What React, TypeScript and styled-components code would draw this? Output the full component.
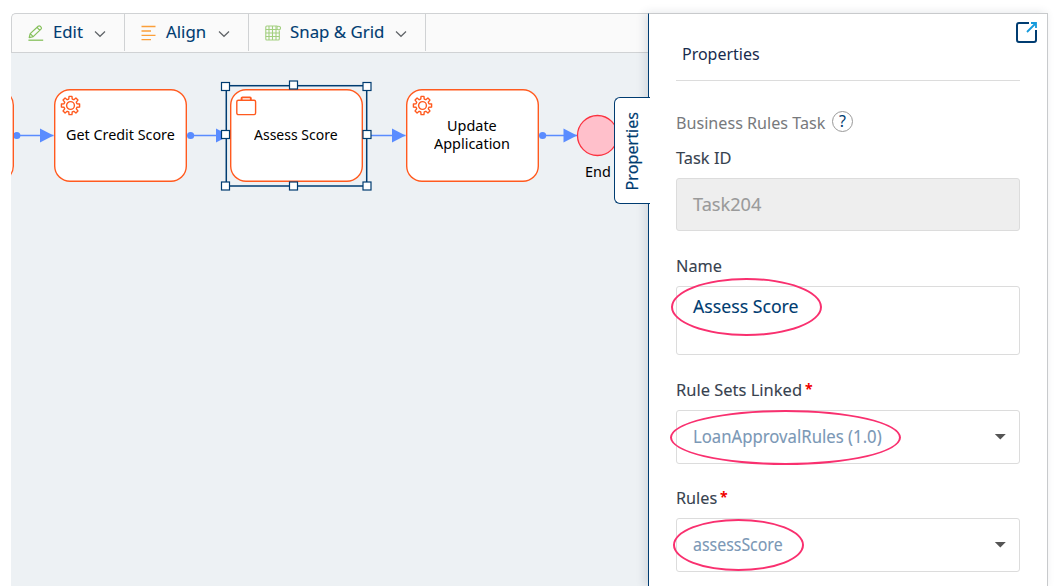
import React, { useLayoutEffect, useRef } from "react";
import styled, { createGlobalStyle } from "styled-components";

const NAVY = "#003c71";
const ORANGE = "#ff5a1f";
const BLUE = "#5a8cff";

const GlobalStyle = createGlobalStyle`
  * { box-sizing: border-box; }
  body {
    margin: 0;
    background: #fff;
    font-family: "Noto Sans", "Open Sans", sans-serif;
    overflow: hidden;
  }
`;

/* Text condensed to a fixed width */
const FitBox = styled.span<{ $w: number }>`
  display: inline-block;
  width: ${(p) => p.$w}px;
  white-space: nowrap;
  text-align: left;
`;
const FitInner = styled.span`
  display: inline-block;
  transform-origin: 0 50%;
`;
function Fit({ w, children }: { w: number; children: string }) {
  const ref = useRef<HTMLSpanElement>(null);
  useLayoutEffect(() => {
    const el = ref.current;
    if (el) el.style.transform = `scaleX(${w / el.offsetWidth})`;
  }, [w, children]);
  return (
    <FitBox $w={w}>
      <FitInner ref={ref}>{children}</FitInner>
    </FitBox>
  );
}

const Editor = styled.div`
  display: flex;
  width: 1037px;
  height: 573px;
  margin: 13px 0 0 11px;
`;
const Workspace = styled.main`
  display: flex;
  flex-direction: column;
  width: 637px;
`;
const Toolbar = styled.div`
  display: flex;
  height: 40px;
  flex: none;
  padding-bottom: 1px;
  background: #fafafa;
  border: 1px solid #d0d2d4;
  border-right: 0;
  border-top-left-radius: 5px;
`;
const ToolButton = styled.button<{ $w: number; $gap: number }>`
  display: flex;
  align-items: center;
  width: ${(p) => p.$w}px;
  padding: 0 0 0 16px;
  border: 0;
  border-right: 1px solid #d0d2d4;
  background: none;
  color: ${NAVY};
  font: 17px/36px "Noto Sans", sans-serif;
  -webkit-text-stroke: 0.1px ${NAVY};
  svg { flex: none; }
  > span { margin: -2px ${(p) => p.$gap}px 0 9px; }
`;
const Canvas = styled.section`
  position: relative;
  flex: 1;
  background: #edf1f4;
  overflow: hidden;
`;
const Layer = styled.svg`
  position: absolute;
  left: 0;
  top: 0;
  pointer-events: none;
`;
const TaskNode = styled.div<{ $x: number }>`
  position: absolute;
  left: ${(p) => p.$x}px;
  top: 36px;
  width: 133.5px;
  height: 93.3px;
  display: flex;
  flex-direction: column;
  align-items: center;
  justify-content: center;
  padding-bottom: 3px;
  border-radius: 16px;
  background: #fff;
  box-shadow: inset 0 0 0 1.4px ${ORANGE};
  color: #000;
  font-size: 15px;
  line-height: 18px;
  > svg { position: absolute; left: 6px; top: 5.6px; }
`;
const EndLabel = styled.div`
  position: absolute;
  left: 574px;
  top: 108px;
  font-size: 15px;
  line-height: 20px;
  color: #000;
`;
const Panel = styled.aside`
  position: relative;
  width: 400px;
  padding: 0 27px;
  background: #fff;
  border: 1px solid #c8cacc;
  border-bottom: 0;
  border-left-color: ${NAVY};
  box-shadow: -3px 0 9px rgba(40, 60, 80, 0.14);
`;
const PanelTab = styled.div`
  position: absolute;
  left: -35px;
  top: 83px;
  width: 36px;
  height: 107px;
  display: flex;
  align-items: center;
  justify-content: center;
  padding-right: 2px;
  border: 1px solid ${NAVY};
  border-right: 0;
  border-radius: 6px 0 0 6px;
  background: #fff;
  color: ${NAVY};
  font-size: 17px;
  line-height: 20px;
  -webkit-text-stroke: 0.15px ${NAVY};
  > span { flex: none; transform: rotate(-90deg); }
`;
const PanelHeader = styled.header`
  height: 67px;
  padding: 30px 0 0 6px;
  border-bottom: 1px solid #dcdcdc;
  color: #172b4d;
  font-size: 17px;
  line-height: 20px;
`;
const PopOut = styled.svg`
  position: absolute;
  right: 9px;
  top: 7px;
`;
const TaskKind = styled.div`
  display: flex;
  align-items: center;
  gap: 7px;
  height: 22px;
  margin-top: 30px;
  color: #77797c;
  font-size: 17px;
  line-height: 22px;
  > span:first-child { margin-top: 1px; }
`;
const Help = styled.span`
  width: 21px;
  height: 21px;
  margin-top: -1px;
  border: 1px solid #999;
  border-radius: 50%;
  color: ${NAVY};
  font-size: 16px;
  line-height: 19px;
  text-align: center;
`;
const Field = styled.div<{ $mt: number }>`
  margin-top: ${(p) => p.$mt}px;
`;
const Label = styled.label`
  display: flex;
  gap: 3px;
  height: 20px;
  color: #37424f;
  font-size: 17px;
  line-height: 20px;
  -webkit-text-stroke: 0.1px #37424f;
`;
const Required = styled.b`
  color: #f00000;
  font-size: 14px;
  line-height: 18px;
  -webkit-text-stroke: 0;
`;
const Control = styled.div<{ $h: number; $mt?: number; $tone: string; $fill?: string; $line?: number }>`
  position: relative;
  display: flex;
  justify-content: space-between;
  height: ${(p) => p.$h}px;
  margin-top: ${(p) => p.$mt ?? 10}px;
  padding: 0 13px 0 15.5px;
  border: 1px solid #dcdcdc;
  border-radius: 3px;
  background: ${(p) => p.$fill ?? "#fff"};
  color: ${(p) => p.$tone};
  font-size: 17.5px;
  line-height: ${(p) => p.$line ?? 51}px;
  -webkit-text-stroke: 0.1px ${(p) => p.$tone};
  > svg { margin-top: 23px; }
`;
const Ring = styled.i<{ $x: number; $y: number; $w: number; $h: number }>`
  position: absolute;
  left: ${(p) => p.$x}px;
  top: ${(p) => p.$y}px;
  width: ${(p) => p.$w}px;
  height: ${(p) => p.$h}px;
  border: 2px solid #f9306f;
  border-radius: 50%;
`;

const ChevronIcon = styled.svg`
  margin-top: 3px;
`;
const Chevron = () => (
  <ChevronIcon width="12" height="8" viewBox="0 0 12 8" fill="none" stroke="#606468" strokeWidth="1.2">
    <path d="M1 1.5 6 6.3 11 1.5" />
  </ChevronIcon>
);
const Caret = () => (
  <svg width="12" height="6" viewBox="0 0 12 6">
    <path d="M.8 0h11L6.3 5.5z" fill="#555" />
  </svg>
);

const gearPath = (() => {
  const pts: string[] = [];
  for (let i = 0; i < 8; i++) {
    const steps: [number, number][] = [[-15, 6.7], [-9, 9.2], [9, 9.2], [15, 6.7]];
    for (const [d, r] of steps) {
      const a = ((i * 45 + d - 90) * Math.PI) / 180;
      pts.push(`${(10.5 + r * Math.cos(a)).toFixed(2)} ${(10.5 + r * Math.sin(a)).toFixed(2)}`);
    }
  }
  return `M${pts.join("L")}Z`;
})();
const Gear = () => (
  <svg width="21" height="21" viewBox="0 0 21 21" fill="none" stroke={ORANGE} strokeWidth="1.4" strokeLinejoin="round">
    <path d={gearPath} />
    <circle cx="10.5" cy="10.5" r="3.9" />
  </svg>
);
const Briefcase = () => (
  <svg width="21" height="21" viewBox="0 0 21 21" fill="none" stroke={ORANGE}>
    <rect x="0.8" y="5.2" width="18.8" height="14.4" rx="1.6" strokeWidth="1.4" />
    <path d="M5.6 5V3.2Q5.6 2.4 6.4 2.4H14Q14.8 2.4 14.8 3.2V5" strokeWidth="1.9" />
  </svg>
);

const edges = [
  { from: 5.8, head: 29, to: 42.5 },
  { from: 179.6, head: 205, to: 218.5 },
  { from: 356, head: 381, to: 394.5 },
  { from: 531.6, head: 552.5, to: 566 },
];
const handles = [
  [214.5, 33.5], [282.5, 32], [356, 33.5],
  [214.5, 81.5], [356, 81.5],
  [214.5, 133], [282.5, 133], [356, 133],
];

export default function App() {
  return (
    <>
      <GlobalStyle />
      <Editor>
        <Workspace>
          <Toolbar>
            <ToolButton $w={113} $gap={11}>
              <svg width="16" height="18" viewBox="0 0 16 18" fill="none" stroke="#86c05c" strokeWidth="1.2" strokeLinejoin="round">
                <path d="M1.2 13.6 2.2 9.6 10.2 2.2Q11.2 1.4 12.2 2.2L13.2 3.3Q13.9 4.2 13 5.1L5.2 12.6ZM9 3.4 11.8 6.3M2.2 9.6 5.2 12.6" />
                <path d="M.4 16.2H15.2" strokeWidth="1.3" />
              </svg>
              <Fit w={29.5}>Edit</Fit>
              <Chevron />
            </ToolButton>
            <ToolButton $w={124} $gap={11}>
              <svg width="16" height="18" viewBox="0 0 16 18" stroke="#fb9f3a" strokeWidth="1.3">
                <path d="M.5 2.5H14.5M.5 7H10M.5 11.3H14.5M.5 15.7H10" />
              </svg>
              <Fit w={40.5}>Align</Fit>
              <Chevron />
            </ToolButton>
            <ToolButton $w={177} $gap={11}>
              <svg width="16" height="18" viewBox="0 0 16 18" fill="none" stroke="#a3cf80" strokeWidth="1.1">
                <path d="M12.5 2H1.8Q.8 2 .8 3V15Q.8 16 1.8 16H13.3Q14.3 16 14.3 15V6.5" />
                <path d="M4 2V16M7.5 2V16M11 2V16M.8 5.5H12.5M.8 9H14.3M.8 12.5H14.3" />
                <circle cx="13.7" cy="4" r="1.8" />
              </svg>
              <Fit w={94}>{"Snap & Grid"}</Fit>
              <Chevron />
            </ToolButton>
          </Toolbar>
          <Canvas>
            <Layer width="637" height="533">
              {edges.map((e) => (
                <g key={e.from} fill={BLUE} stroke="none">
                  <path d={`M${e.from} 82.5H${e.to}`} stroke={BLUE} strokeWidth="1.3" />
                  <circle cx={e.from} cy="82.5" r="3.6" />
                  <path d={`M${e.head} 75.5 ${e.to} 82.5 ${e.head} 89.5z`} />
                </g>
              ))}
              <circle cx="586.5" cy="82.5" r="20" fill="#ffc0cb" stroke="#fb3340" strokeWidth="1.3" />
            </Layer>
            <TaskNode $x={-131} />
            <TaskNode $x={42.7}>
              <Gear />
              <Fit w={109}>Get Credit Score</Fit>
            </TaskNode>
            <TaskNode $x={218.7}>
              <Briefcase />
              <Fit w={84}>Assess Score</Fit>
            </TaskNode>
            <TaskNode $x={394.7}>
              <Gear />
              <Fit w={50}>Update</Fit>
              <Fit w={76}>Application</Fit>
            </TaskNode>
            <EndLabel><Fit w={26}>End</Fit></EndLabel>
            <Layer width="637" height="533" stroke={NAVY}>
              <rect x="215.3" y="32.7" width="140.4" height="100.3" fill="none" strokeWidth="1.5" />
              {handles.map(([x, y]) => (
                <rect key={`${x}-${y}`} x={x - 4} y={y - 4} width="8" height="8" fill="#fff" strokeWidth="1.2" />
              ))}
            </Layer>
          </Canvas>
        </Workspace>
        <Panel>
          <PanelTab><Fit w={79}>Properties</Fit></PanelTab>
          <PopOut width="23" height="23" viewBox="0 0 23 23" fill="none">
            <path d="M14 2H4Q2 2 2 4V19Q2 21 4 21H19Q21 21 21 19V9" stroke={NAVY} strokeWidth="2" />
            <path d="M12 11 20.5 2.5M16 2H21V7" stroke="#169bdc" strokeWidth="1.8" />
          </PopOut>
          <PanelHeader><Fit w={78}>Properties</Fit></PanelHeader>
          <TaskKind>
            <Fit w={149}>Business Rules Task</Fit>
            <Help>?</Help>
          </TaskKind>
          <Field $mt={15}>
            <Label><Fit w={55}>Task ID</Fit></Label>
            <Control $h={53} $mt={10} $tone="#9a9a9a" $fill="#eeeeee"><Fit w={68.5}>Task204</Fit></Control>
          </Field>
          <Field $mt={25}>
            <Label><Fit w={46}>Name</Fit></Label>
            <Control $h={69} $tone={NAVY} $line={39}>
              <Fit w={105}>Assess Score</Fit>
              <Ring $x={-6} $y={-9} $w={151} $h={58} />
            </Control>
          </Field>
          <Field $mt={25}>
            <Label><Fit w={126}>Rule Sets Linked</Fit><Required>*</Required></Label>
            <Control $h={54} $tone="#7b98b6">
              <Fit w={189}>LoanApprovalRules (1.0)</Fit>
              <Caret />
              <Ring $x={-7} $y={-1} $w={231} $h={55} />
            </Control>
          </Field>
          <Field $mt={24}>
            <Label><Fit w={41}>Rules</Fit><Required>*</Required></Label>
            <Control $h={54} $tone="#7b98b6">
              <Fit w={90}>assessScore</Fit>
              <Caret />
              <Ring $x={-4} $y={0} $w={131} $h={52} />
            </Control>
          </Field>
        </Panel>
      </Editor>
    </>
  );
}
